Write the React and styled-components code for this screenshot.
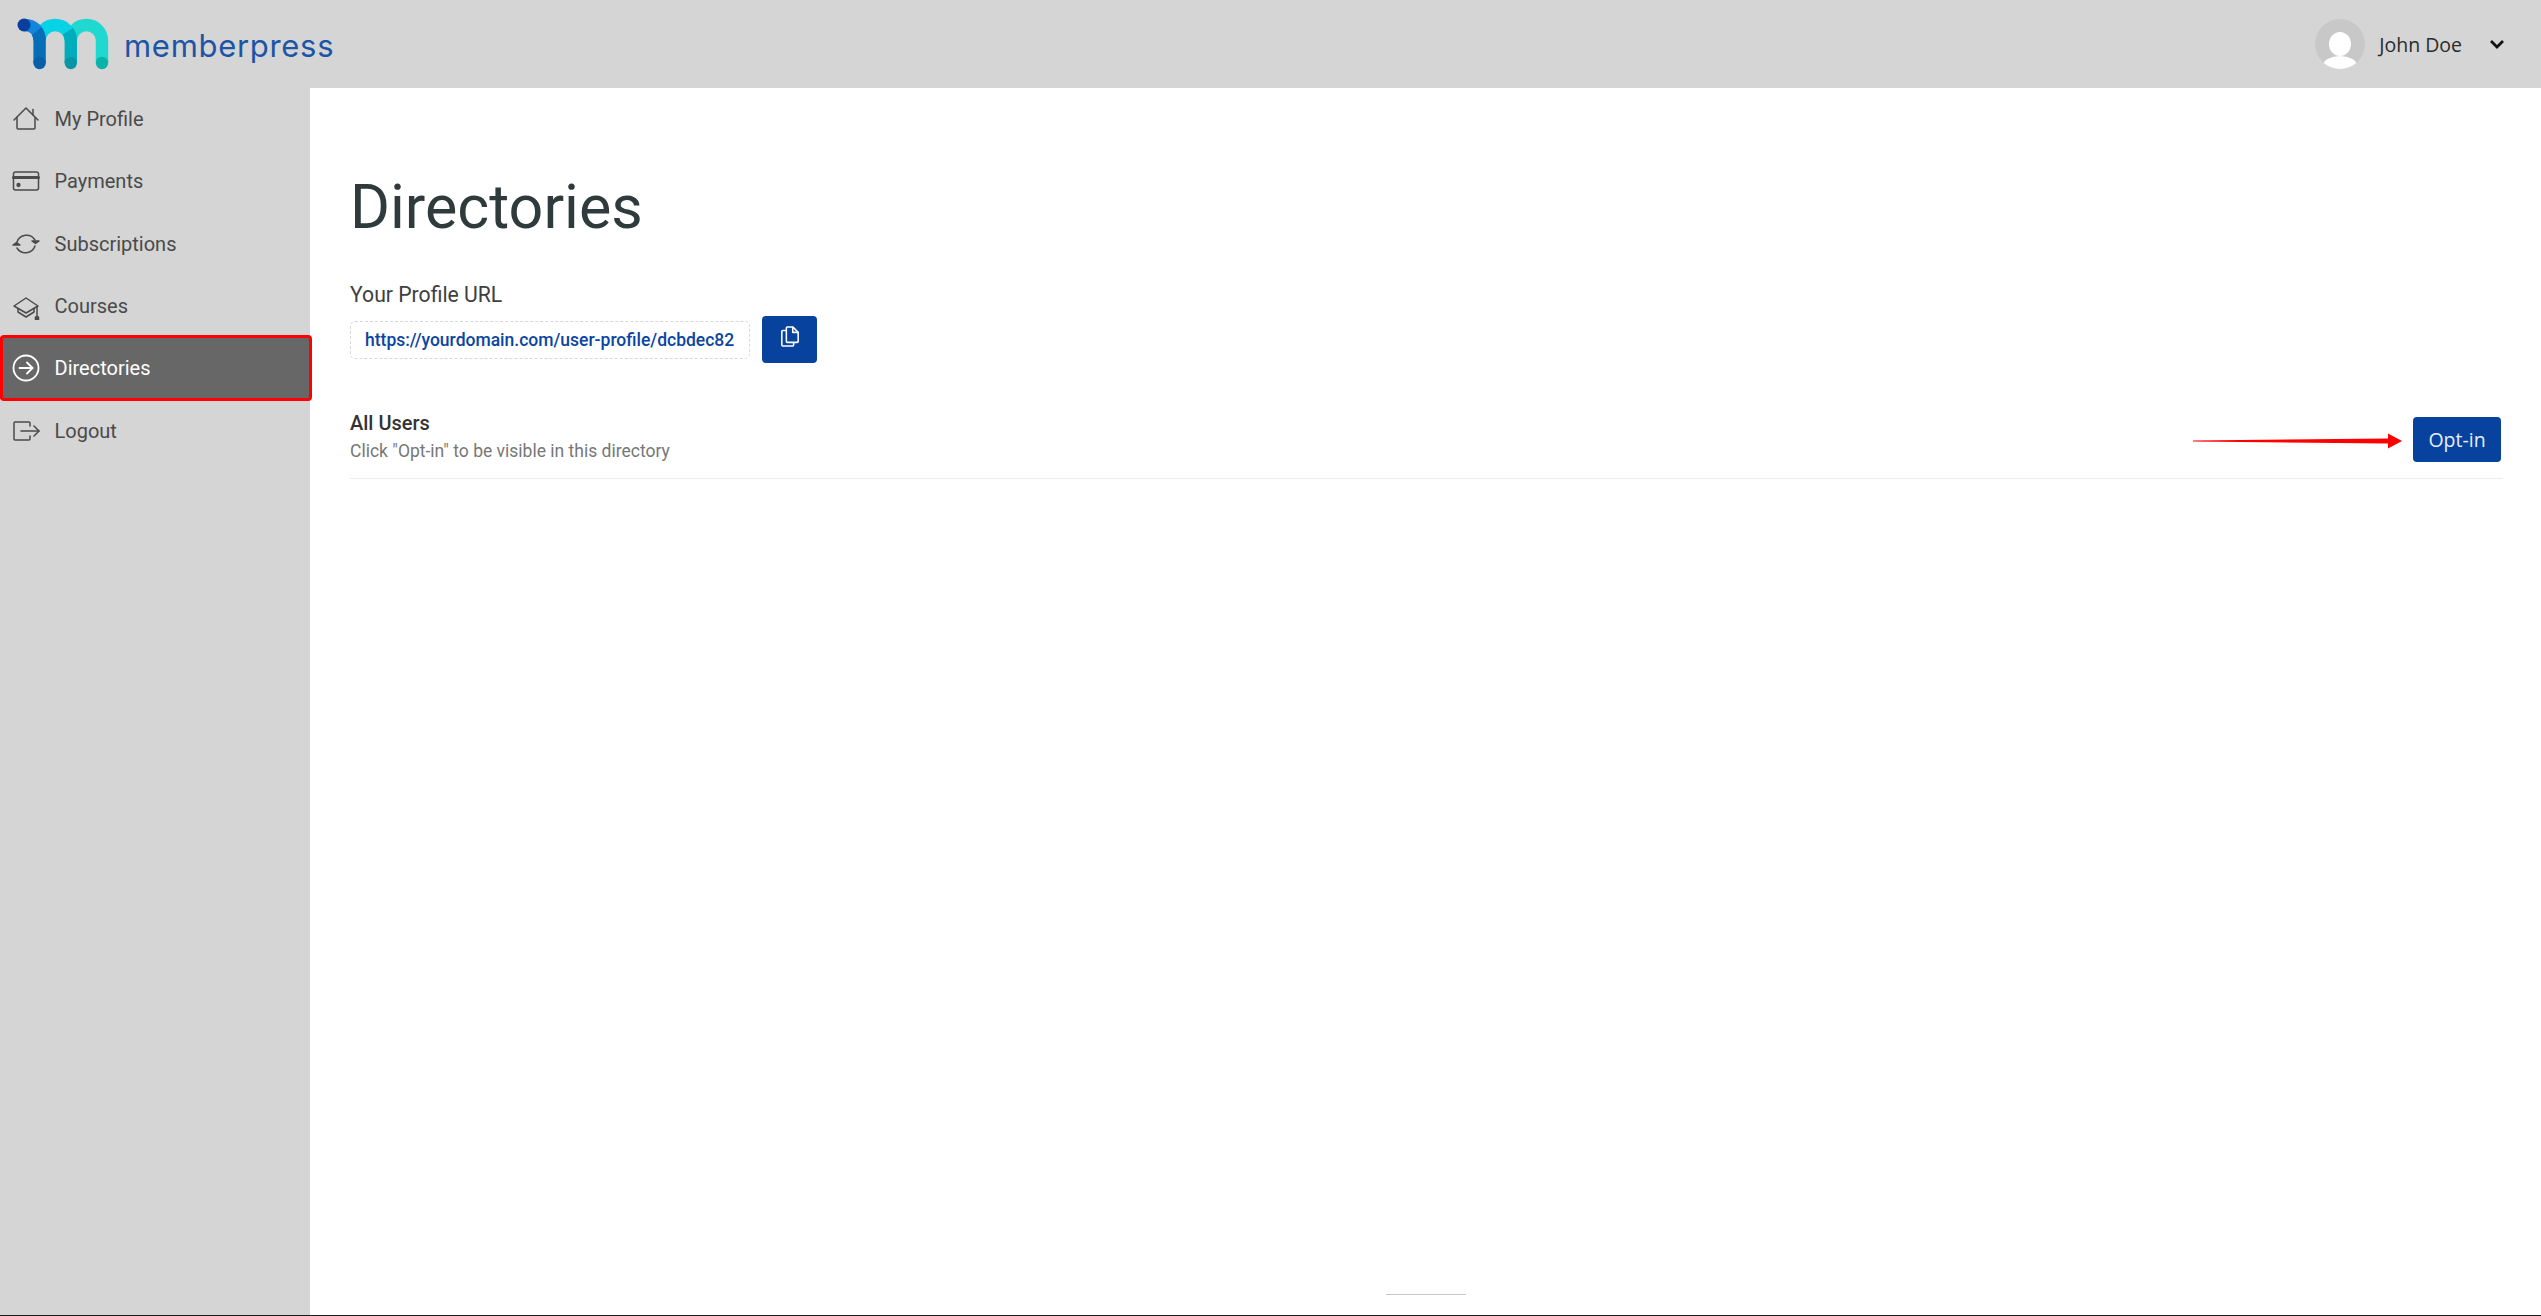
import React from 'react'
import styled, { createGlobalStyle } from 'styled-components'

const GlobalStyle = createGlobalStyle`
  html, body {
    margin: 0;
    padding: 0;
    background: #fff;
    font-family: Roboto, "Liberation Sans", sans-serif;
  }
  * {
    box-sizing: border-box;
  }
`

const Shell = styled.div`
  display: flex;
  flex-direction: column;
  width: 2541px;
  height: 1316px;
  overflow: hidden;
  border-bottom: 1px solid #1a1a1a;
`

const Header = styled.header`
  display: flex;
  flex: none;
  align-items: center;
  justify-content: space-between;
  height: 88px;
  padding: 0 36px 0 17px;
  background: #d5d5d5;
`

const Brand = styled.div`
  display: flex;
  align-items: center;
  gap: 15px;
`

const Wordmark = styled.span`
  font-family: Inter, "Open Sans", sans-serif;
  font-size: 31px;
  line-height: 1;
  letter-spacing: 0.7px;
  color: #1c55a8;
  margin-top: 3px;
`

const UserMenu = styled.div`
  display: flex;
  align-items: center;
`

const Avatar = styled.svg`
  display: block;
  width: 50px;
  height: 50px;
  margin-right: 14px;
`

const UserName = styled.span`
  font-family: "Open Sans", sans-serif;
  font-size: 19.5px;
  color: #2b2b2b;
  margin-right: 27px;
`

const Chevron = styled.svg`
  display: block;
  width: 16px;
  height: 10px;
`

const Body = styled.div`
  display: grid;
  flex: 1;
  grid-template-columns: 310px 1fr;
  min-height: 0;
`

const Sidebar = styled.nav`
  position: relative;
  z-index: 1;
  background: #d5d5d5;
`

const NavItem = styled.a`
  display: flex;
  position: relative;
  align-items: center;
  height: 62.3px;
  padding-left: 12px;
  font-size: 20px;
  color: ${props => props.$active ? '#fff' : '#4a4a4a'};
  background: ${props => props.$active ? '#676767' : 'transparent'};

  ${props => props.$active && `
    &::after {
      content: "";
      position: absolute;
      top: -2px;
      bottom: -2px;
      left: 0;
      right: -2px;
      border: 3px solid #f00;
      border-radius: 4px;
    }
  `}
`

const NavIcon = styled.svg`
  display: block;
  flex: none;
  width: 28px;
  height: 28px;
  margin-right: 14.5px;
  fill: none;
  stroke: currentColor;
  stroke-width: 1.5;
  stroke-linecap: round;
  stroke-linejoin: round;
`

const Main = styled.main`
  display: flex;
  flex-direction: column;
  position: relative;
  padding: 70px 38px 0 40px;
  background: #fff;
`

const Title = styled.h1`
  margin: 0 0 25px;
  font-size: 61px;
  font-weight: 400;
  line-height: 98px;
  color: #2f3a3c;
`

const FieldLabel = styled.div`
  margin-bottom: 7px;
  font-size: 21.2px;
  line-height: 28px;
  color: #404040;
`

const UrlRow = styled.div`
  display: flex;
  align-items: center;
  gap: 12px;
  margin-bottom: 46px;
`

const UrlBox = styled.div`
  display: flex;
  align-items: center;
  width: 400px;
  height: 38px;
  padding-left: 14px;
  border: 1px dashed #d8d8d8;
  border-radius: 5px;
  font-size: 17.5px;
  font-weight: 500;
  color: #0a45a3;
  white-space: nowrap;
`

const CopyButton = styled.button`
  display: flex;
  align-items: center;
  justify-content: center;
  width: 55px;
  height: 47px;
  padding: 0 0 8px;
  border: 0;
  border-radius: 4px;
  background: #06429e;
`

const CopyIcon = styled.svg`
  display: block;
  width: 20px;
  height: 22px;
  fill: none;
  stroke: #fff;
  stroke-width: 1.7;
  stroke-linejoin: round;
`

const DirectoryRow = styled.div`
  display: flex;
  align-items: flex-end;
  justify-content: space-between;
  padding-bottom: 14px;
  border-bottom: 1px solid #ececec;
`

const DirectoryName = styled.div`
  font-size: 20px;
  font-weight: 500;
  line-height: 29px;
  color: #333;
`

const DirectoryHint = styled.div`
  font-size: 17.5px;
  line-height: 26px;
  color: #777;
`

const DirectoryAction = styled.div`
  display: flex;
  align-items: center;
  gap: 11px;
  margin: 0 2px 2px 0;
`

const PointerArrow = styled.svg`
  display: block;
  width: 209px;
  height: 16px;
  margin-top: 2px;
`

const OptInButton = styled.button`
  width: 88px;
  height: 45px;
  padding: 0;
  border: 0;
  border-radius: 4px;
  background: #06429e;
  font-family: "Open Sans", sans-serif;
  font-size: 19.5px;
  color: #e8eefa;
`

const FooterRule = styled.div`
  position: absolute;
  left: 1076px;
  bottom: 20px;
  width: 80px;
  height: 1px;
  background: #c8c8c8;
`

const Logo = () => (
  <svg width="92" height="52" viewBox="17 17 92 52" style={{ display: 'block' }}>
    <g fill="none" strokeWidth="12.4">
      <path d="M102 62V39.6a15.6 15.6 0 0 0-31.2 0" stroke="#1fd8cf" />
      <path d="M70.8 39.6a15.6 15.6 0 0 0-31.2 0" stroke="#08d2e6" />
      <path d="M70.8 62V39.6c0-5-2-8-3-9.5" stroke="#00aebb" />
      <path d="M24 24c10 0 15.6 6 15.6 15.6" stroke="#1285dc" />
      <path d="M39.6 62V39.6c0-4-1-7-3-9.5" stroke="#066eb6" />
    </g>
    <circle cx="24" cy="24" r="6.5" fill="#0a3f9f" />
    <circle cx="39.6" cy="62" r="6.2" fill="#0660a8" />
    <circle cx="70.8" cy="62" r="6.2" fill="#0896a6" />
    <circle cx="102" cy="62" r="6.2" fill="#0ab3a8" />
  </svg>
)

const icons = {
  home: (
    <>
      <path d="M2 15 14 3l12 12" />
      <path d="M21 4.500V10" />
      <path d="M5 12.500V23a1 1 0 0 0 1 1h16a1 1 0 0 0 1-1V12.500" />
    </>
  ),
  card: (
    <>
      <rect x="1.500" y="5" width="25" height="18" rx="2" />
      <path d="M1.500 10.500h25" strokeWidth="3" />
      <circle cx="6.500" cy="18" r="1.400" fill="currentColor" />
    </>
  ),
  sync: (
    <>
      <path d="M5 12a10 10 0 0 1 18-2" />
      <path d="M23 16a10 10 0 0 1-18 2" />
      <path d="M20 11h7l-3.500 2.500z" fill="currentColor" />
      <path d="M1 15h7l-3.500-2.500z" fill="currentColor" />
    </>
  ),
  cap: (
    <>
      <path d="m14 6 12 8-12 7-12-7z" />
      <path d="M6 16.500V20l8 5 8-5v-3.500" />
      <path d="M25 15v10" />
      <rect x="23.500" y="25" width="3" height="3" fill="currentColor" />
    </>
  ),
  arrow: (
    <>
      <circle cx="14" cy="14" r="12.500" strokeWidth="1.800" />
      <path d="M7.500 14h13" strokeWidth="1.800" />
      <path d="m15 8.500 5.500 5.500-5.500 5.500" strokeWidth="1.800" />
    </>
  ),
  logout: (
    <>
      <path d="M18 9V6a1 1 0 0 0-1-1H3a1 1 0 0 0-1 1v16a1 1 0 0 0 1 1h14a1 1 0 0 0 1-1v-3" />
      <path d="M9 14h18" />
      <path d="m22 9 5 5-5 5" />
    </>
  )
}

const navItems = [
  { label: 'My Profile', icon: 'home' },
  { label: 'Payments', icon: 'card' },
  { label: 'Subscriptions', icon: 'sync' },
  { label: 'Courses', icon: 'cap' },
  { label: 'Directories', icon: 'arrow', active: true },
  { label: 'Logout', icon: 'logout' }
]

export default function App() {
  return (
    <Shell>
      <GlobalStyle />
      <Header>
        <Brand>
          <Logo />
          <Wordmark>memberpress</Wordmark>
        </Brand>
        <UserMenu>
          <Avatar viewBox="0 0 50 50">
            <defs>
              <clipPath id="avatar-clip">
                <circle cx="25" cy="25" r="25" />
              </clipPath>
            </defs>
            <circle cx="25" cy="25" r="25" fill="#c8c8c8" />
            <g clipPath="url(#avatar-clip)" fill="#fff">
              <ellipse cx="25" cy="25" rx="11" ry="12" />
              <ellipse cx="25" cy="46" rx="17" ry="9" />
            </g>
          </Avatar>
          <UserName>John Doe</UserName>
          <Chevron viewBox="0 0 16 10">
            <path d="M2 2l6 6 6-6" fill="none" stroke="#111" strokeWidth="2.800" />
          </Chevron>
        </UserMenu>
      </Header>
      <Body>
        <Sidebar>
          {navItems.map(item => (
            <NavItem key={item.label} $active={item.active}>
              <NavIcon viewBox="0 0 28 28">{icons[item.icon]}</NavIcon>
              {item.label}
            </NavItem>
          ))}
        </Sidebar>
        <Main>
          <Title>Directories</Title>
          <FieldLabel>Your Profile URL</FieldLabel>
          <UrlRow>
            <UrlBox>https://yourdomain.com/user-profile/dcbdec82</UrlBox>
            <CopyButton aria-label="Copy">
              <CopyIcon viewBox="0 0 22 24">
                <path d="M8 2h6l6 6v10a1 1 0 0 1-1 1H8a1 1 0 0 1-1-1V3a1 1 0 0 1 1-1z" />
                <path d="M14 2v6h6" />
                <path d="M7 6H3a1 1 0 0 0-1 1v15a1 1 0 0 0 1 1h11a1 1 0 0 0 1-1v-3" />
              </CopyIcon>
            </CopyButton>
          </UrlRow>
          <DirectoryRow>
            <div>
              <DirectoryName>All Users</DirectoryName>
              <DirectoryHint>Click "Opt-in" to be visible in this directory</DirectoryHint>
            </div>
            <DirectoryAction>
              <PointerArrow viewBox="0 0 209 16">
                <path d="M0 7.500 195 5.500V.5L209 8l-14 7.500v-5L0 8.500z" fill="#f00" />
              </PointerArrow>
              <OptInButton>Opt-in</OptInButton>
            </DirectoryAction>
          </DirectoryRow>
          <FooterRule />
        </Main>
      </Body>
    </Shell>
  )
}
